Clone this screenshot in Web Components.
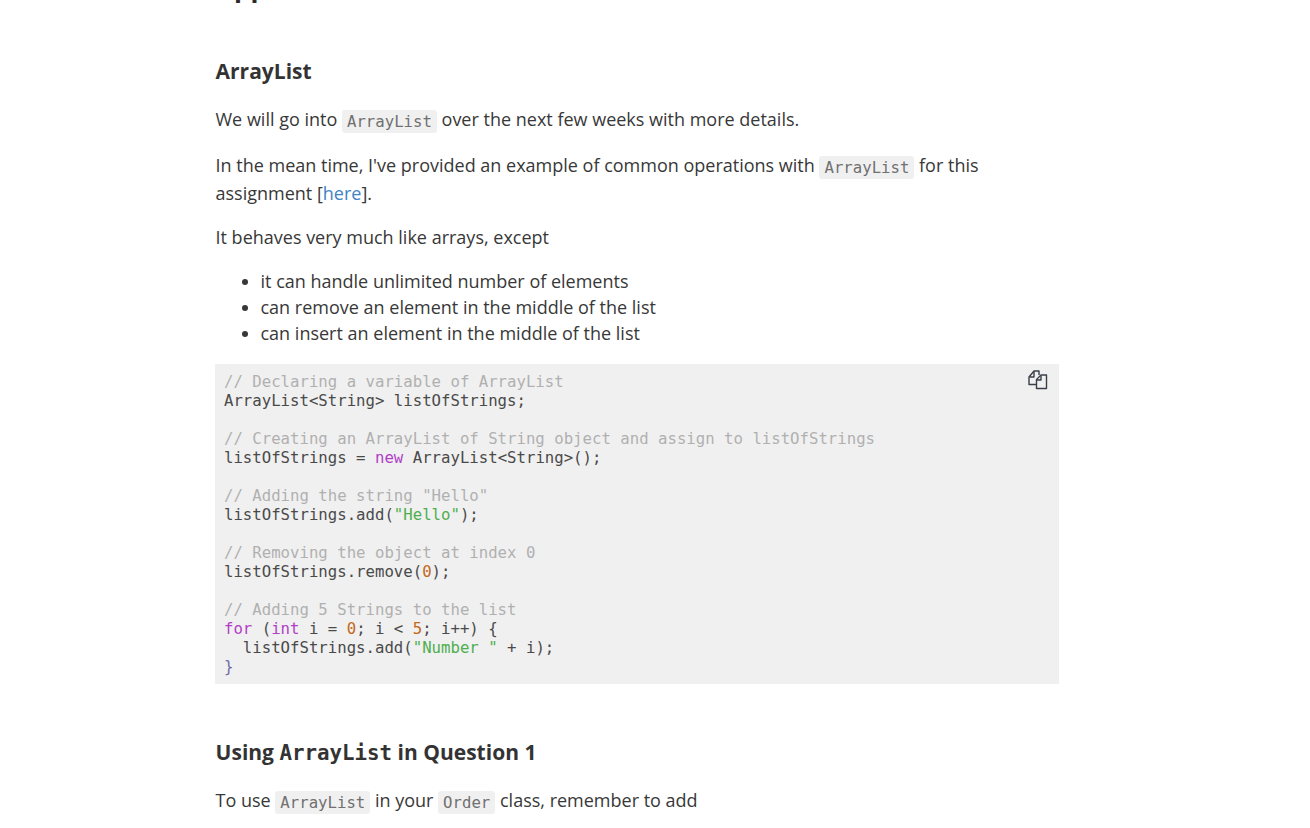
<!DOCTYPE html>
<html>
<head>
<meta charset="utf-8">
<title>ArrayList</title>
<style>
  html, body { margin: 0; background: #fff; overflow: hidden; }
</style>
</head>
<body>
<doc-page>
  <doc-title>Appendix</doc-title>
  <doc-heading style="--top: 50px">ArrayList</doc-heading>
  <doc-para style="--top: 20px">We will go into <inline-code>ArrayList</inline-code> over the next few weeks with more details.</doc-para>
  <doc-para style="--top: 18px">In the mean time, I've provided an example of common operations with <inline-code>ArrayList</inline-code> for this assignment [<a href="#" style="color:#4183c4;text-decoration:none">here</a>].</doc-para>
  <doc-para>It behaves very much like arrays, except</doc-para>
  <doc-list>
    <li>it can handle unlimited number of elements</li>
    <li>can remove an element in the middle of the list</li>
    <li>can insert an element in the middle of the list</li>
  </doc-list>
  <code-block></code-block>
  <doc-heading style="--top: 54px"><span>Using <inline-code plain>ArrayList</inline-code> in Question 1</span></doc-heading>
  <doc-para style="--top: 20px">To use <inline-code>ArrayList</inline-code> in your <inline-code>Order</inline-code> class, remember to add</doc-para>
</doc-page>

<script>
  const BODY_FONT = `"Open Sans", "Noto Sans", sans-serif`;
  const MONO_FONT = `"DejaVu Sans Mono", "Liberation Mono", monospace`;

  class DocPage extends HTMLElement {
    constructor() {
      super();
      this.attachShadow({ mode: "open" });
      this.shadowRoot.innerHTML = `
        <style>
          :host {
            display: block;
            width: 844px;
            height: 828px;
            overflow: hidden;
            margin-left: 215px;
            font: 18px/28px ${BODY_FONT};
            color: #383838;
          }
        </style>
        <slot></slot>`;
    }
  }

  class DocTitle extends HTMLElement {
    constructor() {
      super();
      this.attachShadow({ mode: "open" });
      this.shadowRoot.innerHTML = `
        <style>
          :host {
            display: block;
            margin-top: -33px;
            padding-left: 1px;
            font-size: 26px;
            line-height: 40px;
            font-weight: 700;
            color: #2b2b2b;
          }
        </style>
        <slot></slot>`;
    }
  }

  class DocHeading extends HTMLElement {
    constructor() {
      super();
      this.attachShadow({ mode: "open" });
      this.shadowRoot.innerHTML = `
        <style>
          :host {
            display: block;
            margin-top: var(--top, 40px);
            padding-left: 0.6px;
            font-size: 21px;
            line-height: 28px;
            font-weight: 700;
            color: #333;
          }
        </style>
        <slot></slot>`;
    }
  }

  class DocPara extends HTMLElement {
    constructor() {
      super();
      this.attachShadow({ mode: "open" });
      this.shadowRoot.innerHTML = `
        <style>
          :host {
            display: block;
            margin-top: var(--top, 16px);
            padding-left: 0.5px;
          }
        </style>
        <slot></slot>`;
    }
  }

  class InlineCode extends HTMLElement {
    constructor() {
      super();
      this.attachShadow({ mode: "open" });
      this.shadowRoot.innerHTML = `
        <style>
          :host {
            display: inline;
            font-family: ${MONO_FONT};
            font-size: 15.68px;
            line-height: 1;
            vertical-align: -1px;
            background: #f0f0f0;
            color: #707070;
            border-radius: 3px;
            padding: 2px 5px;
          }
          :host([plain]) {
            background: none;
            padding: 0;
            color: inherit;
            font-size: 20.8px;
            vertical-align: baseline;
          }
        </style>
        <slot></slot>`;
    }
  }

  class DocList extends HTMLElement {
    constructor() {
      super();
      this.attachShadow({ mode: "open" });
      this.shadowRoot.innerHTML = `
        <style>
          :host {
            display: block;
            margin-top: 17px;
            padding-left: 45.5px;
            line-height: 26px;
          }
        </style>
        <slot></slot>`;
    }
  }

  const CODE = [
    `<i>// Declaring a variable of ArrayList</i>`,
    `ArrayList&lt;String&gt; listOfStrings;`,
    ``,
    `<i>// Creating an ArrayList of String object and assign to listOfStrings</i>`,
    `listOfStrings = <b>new</b> ArrayList&lt;String&gt;();`,
    ``,
    `<i>// Adding the string "Hello"</i>`,
    `listOfStrings.add(<s>"Hello"</s>);`,
    ``,
    `<i>// Removing the object at index 0</i>`,
    `listOfStrings.remove(<u>0</u>);`,
    ``,
    `<i>// Adding 5 Strings to the list</i>`,
    `<b>for</b> (<b>int</b> i = <u>0</u>; i &lt; <u>5</u>; i++) {`,
    `  listOfStrings.add(<s>"Number "</s> + i);`,
    `<em>}</em>`,
  ].join("\n");

  class CodeBlock extends HTMLElement {
    constructor() {
      super();
      this.attachShadow({ mode: "open" });
      this.shadowRoot.innerHTML = `
        <style>
          :host {
            display: block;
            position: relative;
            margin-top: 18px;
            background: #f0f0f0;
          }
          pre {
            margin: 0;
            padding: 8px 9px;
            font: 15.68px/19px ${MONO_FONT};
            color: #4a4a4a;
          }
          i { font-style: normal; color: #b0b0b0; }
          b { font-weight: normal; color: #b13fc6; }
          s { text-decoration: none; color: #4fae4f; }
          u { text-decoration: none; color: #c2691c; }
          em { font-style: normal; color: #6a6aa8; }
          svg { position: absolute; top: 6px; right: 11px; }
        </style>
        <pre>${CODE}</pre>
        <svg width="20" height="20" viewBox="0 0 20 20" fill="none" stroke="#3a3f48" stroke-width="1.4" stroke-linejoin="round">
          <path d="M8.5 14.5H1V7L6 1H11V5"/>
          <path d="M1.5 7H6V1.5"/>
          <path d="M8.5 18.5V9.5L13 5H18.5V18.5Z"/>
          <path d="M8.5 10H13V5.5"/>
        </svg>`;
    }
  }

  customElements.define("doc-page", DocPage);
  customElements.define("doc-title", DocTitle);
  customElements.define("doc-heading", DocHeading);
  customElements.define("doc-para", DocPara);
  customElements.define("inline-code", InlineCode);
  customElements.define("doc-list", DocList);
  customElements.define("code-block", CodeBlock);
</script>
</body>
</html>
